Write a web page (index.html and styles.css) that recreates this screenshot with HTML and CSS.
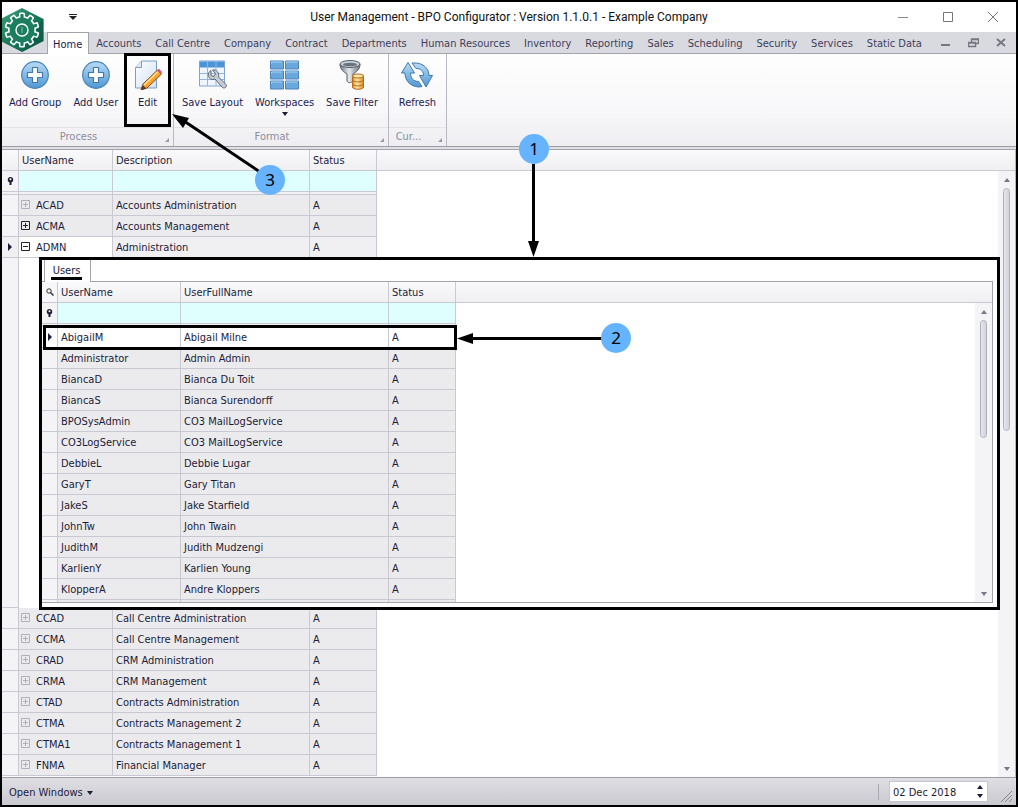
FILE: index.html
```html
<!DOCTYPE html>
<html lang="en">
<head>
<meta charset="utf-8">
<title>User Management - BPO Configurator</title>
<link rel="stylesheet" href="styles.css">
</head>
<body>
<svg width="0" height="0" class="defs" aria-hidden="true">
  <defs>
    <linearGradient id="blue" x1="0" y1="0" x2="0" y2="1"><stop offset="0" stop-color="#b9dcf5"/><stop offset="1" stop-color="#4f97d2"/></linearGradient>
    <linearGradient id="steel" x1="0" y1="0" x2="1" y2="0"><stop offset="0" stop-color="#6d7580"/><stop offset=".45" stop-color="#e6eaee"/><stop offset="1" stop-color="#6d7580"/></linearGradient>
    <linearGradient id="gold" x1="0" y1="0" x2="1" y2="0"><stop offset="0" stop-color="#e08a1c"/><stop offset=".4" stop-color="#ffe9a8"/><stop offset="1" stop-color="#e08a1c"/></linearGradient>
    <linearGradient id="paper" x1="0" y1="0" x2="1" y2="1"><stop offset="0" stop-color="#ffffff"/><stop offset="1" stop-color="#cfe0f6"/></linearGradient>
    <linearGradient id="hex" x1="0" y1="0" x2="1" y2="1"><stop offset="0" stop-color="#45a07c"/><stop offset=".5" stop-color="#17795a"/><stop offset="1" stop-color="#0d5a48"/></linearGradient>
    <symbol id="i-add" viewBox="0 0 28 28"><circle cx="14" cy="14" r="13.3" fill="url(#blue)" stroke="#4a83b8" stroke-width="1.2"/><path d="M11.5 6.500h5v5h5v5h-5v5h-5v-5h-5v-5h5z" fill="#fff" stroke="#4378ae" stroke-width="1.2" stroke-linejoin="round"/></symbol>
    <symbol id="i-filter" viewBox="0 0 7 8"><circle cx="3.500" cy="2.700" r="2.700" fill="#1e1e32"/><circle cx="3.500" cy="2.200" r="1" fill="#fff"/><path d="M2.500 5h2v3h-2z" fill="#1e1e32"/></symbol>
    <symbol id="i-plus" viewBox="0 0 9 9"><path d="M.5.500h8v8h-8zM2 4.500h5M4.500 2v5" fill="none" stroke="currentColor"/></symbol>
    <symbol id="i-minus" viewBox="0 0 9 9"><path d="M.5.500h8v8h-8zM2 4.500h5" fill="none" stroke="currentColor"/></symbol>
    <g id="teeth"><rect x="-3" y="-17.500" width="6" height="8" rx="1.500"/></g>
    <g id="teeth-in"><rect x="-1.600" y="-15.900" width="3.200" height="8" rx=".8"/></g>
  </defs>
</svg>
<div class="window">
  <header class="titlebar">
    <button class="quick" aria-label="Customize toolbar"><svg width="8" height="6" viewBox="0 0 8 6"><path d="M0 .5h8" stroke="#222"/><path d="M0 2h8L4 6z" fill="#222"/></svg></button>
    <h1 class="title">User Management - BPO Configurator : Version 1.1.0.1 - Example Company</h1>
    <div class="sysbuttons">
      <button aria-label="Minimize"><svg width="10" height="10"><path d="M0 5.500h10" stroke="#888"/></svg></button>
      <button aria-label="Maximize"><svg width="10" height="10"><path d="M.5.500h9v9h-9z" fill="none" stroke="#777"/></svg></button>
      <button aria-label="Close"><svg width="10" height="10"><path d="M0 0l10 10M10 0L0 10" stroke="#777"/></svg></button>
    </div>
  </header>
  <button class="logo" aria-label="Application menu">
    <svg width="42" height="44" viewBox="2 8 42 44">
      <path d="M22 8l21.500 11v22L22 52 .5 41V19z" fill="url(#hex)"/>
      <path d="M43.500 19v22L22 52 34 30z" fill="#0b5745" opacity=".5"/>
      <g transform="translate(22 30)" fill="#fff"><circle r="14"/>
        <use href="#teeth"/><use href="#teeth" transform="rotate(36)"/><use href="#teeth" transform="rotate(72)"/><use href="#teeth" transform="rotate(108)"/><use href="#teeth" transform="rotate(144)"/><use href="#teeth" transform="rotate(180)"/><use href="#teeth" transform="rotate(216)"/><use href="#teeth" transform="rotate(252)"/><use href="#teeth" transform="rotate(288)"/><use href="#teeth" transform="rotate(324)"/></g>
      <g transform="translate(22 30)" fill="#1c7d5f"><circle r="12.400"/>
        <use href="#teeth-in"/><use href="#teeth-in" transform="rotate(36)"/><use href="#teeth-in" transform="rotate(72)"/><use href="#teeth-in" transform="rotate(108)"/><use href="#teeth-in" transform="rotate(144)"/><use href="#teeth-in" transform="rotate(180)"/><use href="#teeth-in" transform="rotate(216)"/><use href="#teeth-in" transform="rotate(252)"/><use href="#teeth-in" transform="rotate(288)"/><use href="#teeth-in" transform="rotate(324)"/></g>
      <circle cx="22" cy="30" r="6" fill="none" stroke="#fff" stroke-width="1.400"/>
      <path d="M22 27v6" stroke="#7fc0a6"/>
    </svg>
  </button>
  <nav class="tabs">
    <button class="tab active">Home</button><button class="tab">Accounts</button><button class="tab">Call Centre</button><button class="tab">Company</button><button class="tab">Contract</button><button class="tab">Departments</button><button class="tab">Human Resources</button><button class="tab">Inventory</button><button class="tab">Reporting</button><button class="tab">Sales</button><button class="tab">Scheduling</button><button class="tab">Security</button><button class="tab">Services</button><button class="tab">Static Data</button>
    <div class="mdi">
      <button aria-label="Minimize child"><svg width="11" height="10"><path d="M1 7h9" stroke="#777784" stroke-width="2"/></svg></button>
      <button aria-label="Restore child"><svg width="11" height="10"><path d="M3.500 4V1h7v4.500H8M3 1.500h8M.5 4.500h7v4h-7zM0 5h8" fill="none" stroke="#777784" stroke-width="1.400"/></svg></button>
      <button aria-label="Close child"><svg width="10" height="10"><path d="M1 1l8 7M9 1L1 8" stroke="#777784" stroke-width="2"/></svg></button>
    </div>
  </nav>
  <section class="ribbon">
    <div class="group g-process">
      <div class="tools">
        <button class="tool"><svg width="28" height="28"><use href="#i-add"/></svg>Add Group</button>
        <button class="tool spaced"><svg width="28" height="28"><use href="#i-add"/></svg>Add User</button>
        <button class="tool marked"><svg width="28" height="30" viewBox="0 0 28 30"><path d="M1.500 7.500l6-6.500h15v27h-21z" fill="url(#paper)" stroke="#7c9cc8"/><path d="M1.500 7.500h6V1" fill="#dce9f9" stroke="#7c9cc8"/><path d="M7 30l2-6L23.500 10l4 4L13 28z" fill="#f6a42c" stroke="#8a4a1c"/><path d="M10 25L24 11.500" stroke="#ffe39a" stroke-width="1.600"/><path d="M7 30l1.700-5 3.700 3.500z" fill="#5b3a22"/><path d="M23 10.500l2-1.800 3 3.200-1.500 2z" fill="#d5586a"/></svg>Edit</button>
      </div>
      <div class="caption">Process<i class="launcher"></i></div>
    </div>
    <div class="group g-format">
      <div class="tools">
        <button class="tool"><svg width="30" height="29" viewBox="0 0 30 29"><path d="M1.500.5h25v25h-25z" fill="#eef5fd" stroke="#7fa2d0"/><path d="M2 1h24v6H2z" fill="#4c94d8"/><path d="M1.500 13h25M1.500 19h25M9.500 1v24M18 1v24" stroke="#93b4dc"/><path d="M13 10c-4 2-3.500 8 1 9l3-.5 7 8c2 2.500 5.500 0 4-2.500l-7.500-7.500c1-4-2-8-6-7l3 3.500-1.500 3-3-1z" fill="#c5ccd5" stroke="#616b78"/></svg>Save Layout</button>
        <button class="tool"><svg width="30" height="29" viewBox="0 0 30 29"><g fill="#69a8dc" stroke="#4b83bd"><path d="M.5.500h13v8H.500zM15.500.500h13v8h-13zM.5 10.500h13v8H.500zM15.500 10.500h13v8h-13zM.5 20.500h13v8H.500zM15.500 20.500h13v8h-13z"/></g><path d="M1.500 3V1.500H12M16.500 3V1.500H28M1.500 13v-1.500H12M16.500 13v-1.500H28M1.500 23v-1.500H12M16.500 23v-1.500H28" fill="none" stroke="#add4f2"/></svg>Workspaces<i class="drop"></i></button>
        <button class="tool"><svg width="26" height="30" viewBox="0 0 26 30"><path d="M1 4c0 6 4 8 7 10v7c1.500 2.500 4 2 6 0v-7c3-2 7-4 7-10z" fill="url(#steel)" stroke="#59616c"/><ellipse cx="11" cy="4" rx="10" ry="3.500" fill="#c9d0d8" stroke="#59616c"/><ellipse cx="11" cy="4.500" rx="7" ry="1.800" fill="#69727f"/><path d="M13.500 16v11c0 3 11 3 11 0V16z" fill="url(#gold)" stroke="#b36a1a"/><ellipse cx="19" cy="16" rx="5.500" ry="2" fill="#ffe7a6" stroke="#b36a1a"/><path d="M13.500 20c1 2.500 10 2.500 11 0M13.500 24c1 2.500 10 2.500 11 0" fill="none" stroke="#b36a1a"/></svg>Save Filter</button>
      </div>
      <div class="caption">Format<i class="launcher"></i></div>
    </div>
    <div class="group g-current">
      <div class="tools">
        <button class="tool"><svg width="32" height="27" viewBox="0 0 32 27"><g fill="url(#blue)" stroke="#3f78ad" stroke-linejoin="round"><path d="M7 1L.500 11.500H4C4 19 9 25 18 25.500l3-.5-3.500-5C12 20 9.500 16 9.500 11.500h4z"/><path d="M25 25.500L31.500 14H28C28 7 22 1.500 14 1.500h-3l4 5.500c5 0 7.500 3 7.500 7h-4z"/></g></svg>Refresh</button>
      </div>
      <div class="caption">Cur...<i class="launcher"></i></div>
    </div>
  </section>
  <main class="content">
    <div class="outer">
      <table class="grid">
        <colgroup><col class="c-ind"><col class="c-code"><col class="c-desc"><col class="c-status"><col></colgroup>
        <thead>
          <tr><th></th><th>UserName</th><th>Description</th><th>Status</th><th class="rest"></th></tr>
          <tr class="filter"><td class="ind"><svg width="7" height="8"><use href="#i-filter"/></svg></td><td><input aria-label="Filter UserName"></td><td><input aria-label="Filter Description"></td><td><input aria-label="Filter Status"></td><td class="rest"></td></tr>
          <tr class="gap"><td></td><td></td><td></td><td></td><td class="rest"></td></tr>
        </thead>
        <tbody>
          <tr><td class="ind"></td><td class="node"><svg width="9" height="9"><use href="#i-plus"/></svg>ACAD</td><td>Accounts Administration</td><td>A</td><td class="rest"></td></tr>
          <tr><td class="ind"></td><td class="node dark"><svg width="9" height="9"><use href="#i-plus"/></svg>ACMA</td><td>Accounts Management</td><td>A</td><td class="rest"></td></tr>
          <tr class="focused"><td class="ind"><i class="pointer"></i></td><td class="node dark"><svg width="9" height="9"><use href="#i-minus"/></svg>ADMN</td><td>Administration</td><td>A</td><td class="rest"></td></tr>
          <tr class="detail-row"><td class="ind"></td><td colspan="4" class="detail">
            <div class="subtabs"><button class="subtab"><span>Users</span></button></div>
            <div class="inner">
              <table class="grid">
                <colgroup><col class="d-ind"><col class="d-user"><col class="d-full"><col class="c-status"><col></colgroup>
                <thead>
                  <tr><th class="ind"><svg width="8" height="8"><circle cx="3" cy="3" r="2.200" fill="none" stroke="#333"/><path d="M4.500 4.500l3 3" stroke="#333" stroke-width="1.500"/></svg></th><th>UserName</th><th>UserFullName</th><th>Status</th><th class="rest"></th></tr>
                  <tr class="filter"><td class="ind"><svg width="7" height="8"><use href="#i-filter"/></svg></td><td><input aria-label="Filter user"></td><td><input aria-label="Filter full name"></td><td><input aria-label="Filter user status"></td><td class="rest"></td></tr>
                  <tr class="gap"><td></td><td></td><td></td><td></td><td class="rest"></td></tr>
                </thead>
                <tbody>
                  <tr class="selected"><td class="ind"><i class="pointer"></i></td><td>AbigailM</td><td>Abigail Milne</td><td>A</td><td class="rest"></td></tr>
                  <tr><td class="ind"></td><td>Administrator</td><td>Admin Admin</td><td>A</td><td class="rest"></td></tr>
                  <tr><td class="ind"></td><td>BiancaD</td><td>Bianca Du Toit</td><td>A</td><td class="rest"></td></tr>
                  <tr><td class="ind"></td><td>BiancaS</td><td>Bianca Surendorff</td><td>A</td><td class="rest"></td></tr>
                  <tr><td class="ind"></td><td>BPOSysAdmin</td><td>CO3 MailLogService</td><td>A</td><td class="rest"></td></tr>
                  <tr><td class="ind"></td><td>CO3LogService</td><td>CO3 MailLogService</td><td>A</td><td class="rest"></td></tr>
                  <tr><td class="ind"></td><td>DebbieL</td><td>Debbie Lugar</td><td>A</td><td class="rest"></td></tr>
                  <tr><td class="ind"></td><td>GaryT</td><td>Gary Titan</td><td>A</td><td class="rest"></td></tr>
                  <tr><td class="ind"></td><td>JakeS</td><td>Jake Starfield</td><td>A</td><td class="rest"></td></tr>
                  <tr><td class="ind"></td><td>JohnTw</td><td>John Twain</td><td>A</td><td class="rest"></td></tr>
                  <tr><td class="ind"></td><td>JudithM</td><td>Judith Mudzengi</td><td>A</td><td class="rest"></td></tr>
                  <tr><td class="ind"></td><td>KarlienY</td><td>Karlien Young</td><td>A</td><td class="rest"></td></tr>
                  <tr><td class="ind"></td><td>KlopperA</td><td>Andre Kloppers</td><td>A</td><td class="rest"></td></tr>
                  <tr class="cut"><td class="ind"></td><td></td><td></td><td></td><td class="rest"></td></tr>
                </tbody>
              </table>
              <div class="scroll"><div class="cap"></div><div class="track"><i class="up"></i><div class="thumb inner-thumb"></div><i class="down"></i></div></div>
            </div>
          </td></tr>
          <tr><td class="ind"></td><td class="node"><svg width="9" height="9"><use href="#i-plus"/></svg>CCAD</td><td>Call Centre Administration</td><td>A</td><td class="rest"></td></tr>
          <tr><td class="ind"></td><td class="node"><svg width="9" height="9"><use href="#i-plus"/></svg>CCMA</td><td>Call Centre Management</td><td>A</td><td class="rest"></td></tr>
          <tr><td class="ind"></td><td class="node"><svg width="9" height="9"><use href="#i-plus"/></svg>CRAD</td><td>CRM Administration</td><td>A</td><td class="rest"></td></tr>
          <tr><td class="ind"></td><td class="node"><svg width="9" height="9"><use href="#i-plus"/></svg>CRMA</td><td>CRM Management</td><td>A</td><td class="rest"></td></tr>
          <tr><td class="ind"></td><td class="node"><svg width="9" height="9"><use href="#i-plus"/></svg>CTAD</td><td>Contracts Administration</td><td>A</td><td class="rest"></td></tr>
          <tr><td class="ind"></td><td class="node"><svg width="9" height="9"><use href="#i-plus"/></svg>CTMA</td><td>Contracts Management 2</td><td>A</td><td class="rest"></td></tr>
          <tr><td class="ind"></td><td class="node"><svg width="9" height="9"><use href="#i-plus"/></svg>CTMA1</td><td>Contracts Management 1</td><td>A</td><td class="rest"></td></tr>
          <tr><td class="ind"></td><td class="node"><svg width="9" height="9"><use href="#i-plus"/></svg>FNMA</td><td>Financial Manager</td><td>A</td><td class="rest"></td></tr>
        </tbody>
      </table>
      <div class="scroll"><div class="cap"></div><div class="track"><i class="up"></i><div class="thumb outer-thumb"></div><i class="down"></i></div></div>
    </div>
  </main>
  <footer class="status">
    <button class="open">Open Windows<i class="drop"></i></button>
    <i class="divider"></i>
    <div class="date"><input value="02 Dec 2018" aria-label="Date"><div class="spin"><button aria-label="Next day"><i class="spin-up"></i></button><button aria-label="Previous day"><i class="spin-down"></i></button></div></div>
    <svg class="grip" width="12" height="12"><path d="M1 12L12 1M5 12l7-7M9 12l3-3" stroke="#85858f"/></svg>
  </footer>
  <svg class="arrows" width="640" height="360" aria-hidden="true">
    <path d="M533.500 164v80M470 338.500h134M184 121l76 51" stroke="#000" stroke-width="3"/>
    <path d="M528 241h11l-5.500 16zM473 333v11l-16-5.500zM172 114l17 4-6 10z"/>
  </svg>
  <span class="mark m1">1</span><span class="mark m2">2</span><span class="mark m3">3</span>
</div>
</body>
</html>
```
FILE: styles.css
```css
*,*::after{box-sizing:border-box}
body{margin:0;font:11px/14px "DejaVu Sans Condensed","DejaVu Sans",sans-serif;color:#1c1c38}
button,input{font:inherit;color:inherit;background:none;border:0;padding:0;margin:0}
i{display:block}
.defs{position:absolute}
.window{position:relative;min-height:100vh;border:2px solid #000;display:flex;flex-direction:column;background:#fff}
.titlebar{display:flex;align-items:center;height:30px;padding:0 18px 0 67px}
.quick{display:flex;width:8px}
.title{flex:1;margin:0;padding-left:43px;text-align:center;font:12px/16px Roboto,"Liberation Sans",sans-serif;color:#111}
.sysbuttons{display:flex;gap:35px}
.sysbuttons button{display:flex}
.logo{position:absolute;left:0;top:6px;z-index:3;display:flex}
.tabs{display:flex;height:22px;padding:0 10px 0 45px;background:#d9d9e0;border-bottom:1px solid #a3a3ae;color:#3e3e5c}
.tab{padding:3px 7px 0;white-space:nowrap}
.tab.active{background:#fff;height:22px;padding:2px 6px 0 5px;border:1px solid #a3a3ae;border-bottom:0;color:#1c1c50}
.mdi{display:flex;align-items:center;gap:17px;margin-left:auto}
.mdi button{display:flex}
.ribbon{display:flex;height:93px;background:linear-gradient(#fefefe,#f8f8fa 60%,#eeeef2);border-bottom:1px solid #9c9ca6}
.group{display:flex;flex-direction:column;border-right:1px solid #b9b9c3}
.g-process{width:172px}
.g-format{width:215px}
.g-current{width:58px}
.tools{flex:1;display:flex;justify-content:space-between}
.g-process .tools{padding:0 2px 0 7px;justify-content:flex-start}
.g-format .tools{padding:0 10px 0 8px}
.g-current .tools{justify-content:center}
.tool{display:flex;flex:none;flex-direction:column;align-items:center;padding-top:6px;white-space:nowrap;color:#1c1c50}
.tool svg{height:30px;margin-bottom:6px}
.tool .drop{margin-top:2px}
.tool.spaced{margin-left:12px}
.tool.marked{width:47px;border:3px solid #000;margin:-1px 0 0 auto;padding-top:4px;z-index:1}
.caption{display:flex;justify-content:center;position:relative;height:19px;padding:2px 18px 0 0;border-top:1px solid #e2e2e8;color:#8d8d9c}
.launcher{position:absolute;right:4px;bottom:4px;border:2px solid #9a9aa4;border-top-color:transparent;border-left-color:transparent}
.drop{border:3px solid transparent;border-top:4px solid #1c1c38;border-bottom:0}
.content{flex:1;border-top:2px solid #dedee3;background:#fff;display:flex}
.outer{flex:1;display:flex;border-top:1px solid #a3a3ae;border-right:1px solid #b5b5bf}
.grid{flex:1;width:100%;table-layout:fixed;border-collapse:separate;border-spacing:0;align-self:flex-start}
.c-ind{width:17px}.c-code{width:94px}.c-desc{width:197px}.c-status{width:67px}
.d-ind{width:16px}.d-user{width:123px}.d-full{width:208px}
.grid th,.grid td{height:21px;padding:2px 3px 0;border-right:1px solid #c9c9d3;border-bottom:1px solid #c9c9d3;text-align:left;font-weight:400;white-space:nowrap;background:#ebebed}
.grid th,.cap{background:linear-gradient(#fafafb,#f0f0f3)}
.grid .ind{padding:0;background:#f4f4f7}
.grid th.ind{background:#f7f7f9}
.grid .ind svg{display:block;margin:0 auto}
.grid .rest{border-right:0}
.grid td.rest{background:#fff;border:0}
.grid .filter td{background:#dfffff;padding:0}
.grid .filter td.ind{background:#f4f4f7}
.grid .filter td.rest{background:#fff}
.filter input{display:block;width:100%;height:19px;padding:0 4px}
.grid .gap td{height:3px;padding:0;background:#f2f2f5}
.grid .gap td.rest{background:#fff}
.grid .cut td{height:2px;padding:0;border-bottom:0}
.node svg{vertical-align:middle;margin:-3px 6px 0 -1px;color:#b0b0ba}
.node.dark svg{color:#222}
.grid .focused td{background:#f0f0f3}
.grid .focused .node,.grid .focused .rest,.grid .selected td{background:#fff}
.pointer{width:4px;height:8px;margin:0 auto;border:4px solid transparent;border-left-color:#1c1c38;border-right:0}
.detail-row{height:350px}
.grid .detail{position:relative;padding:2px 5px 4px 23px;background:#fff;border-right:0;border-bottom:0;vertical-align:top}
.detail::after{content:"";position:absolute;z-index:2;top:-1px;right:-2px;bottom:-2px;left:20px;border:3px solid #000;pointer-events:none}
.subtabs{display:flex;height:22px;padding-left:2px;border-bottom:1px solid #a3a3ae}
.subtab{height:22px;width:47px;padding:2px 2px 0 0;border:1px solid #a3a3ae;border-top:0;border-bottom:0;background:#fff}
.subtab span{display:inline-block;padding:0 2px;border-bottom:3px solid #000;line-height:13px}
.inner{display:flex;border-right:1px solid #a3a3ae;border-bottom:1px solid #a3a3ae}
.selected .ind{position:relative}
.selected .ind::after{content:"";position:absolute;z-index:1;left:1px;top:-2px;width:414px;height:25px;border:3px solid #000;pointer-events:none}
.scroll{display:flex;flex-direction:column;width:17px}
.cap{height:21px;border-bottom:1px solid #c9c9d3}
.track{flex:1;display:flex;flex-direction:column;align-items:center;padding:7px 0 6px;background:#f4f4f7}
.up{border:3px solid transparent;border-bottom:4px solid #77778a;border-top:0}
.down{border:3px solid transparent;border-top:4px solid #77778a;border-bottom:0;margin-top:auto}
.thumb{width:7px;margin-top:6px;border:1px solid #b0b0bb;border-radius:4px;background:linear-gradient(90deg,#e6e6ec,#d2d2da)}
.inner-thumb{height:118px}
.outer-thumb{height:243px}
.status{display:flex;align-items:center;height:28px;padding:0 4px 0 7px;border-top:1px solid #9c9ca6;background:linear-gradient(#dedee3,#c9c9d0)}
.open{display:flex;align-items:center;gap:4px;padding-top:2px}
.divider{width:1px;height:16px;margin:0 10px 0 auto;background:#a9a9b3}
.date{display:flex;width:99px;height:21px;background:#fff;border:1px solid #c5c5cf}
.date input{flex:1;min-width:0;padding:2px 0 0 3px}
.spin{display:flex;flex-direction:column;justify-content:space-around;align-items:center;width:14px}
.spin button{display:flex}
.spin-up{border:3px solid transparent;border-bottom:4px solid #1c1c38;border-top:0}
.spin-down{border:3px solid transparent;border-top:4px solid #1c1c38;border-bottom:0}
.grip{margin-left:12px;align-self:flex-end;margin-bottom:3px}
.arrows{position:absolute;left:-2px;top:-2px;z-index:4;pointer-events:none}
.mark{position:absolute;z-index:5;width:30px;height:30px;border-radius:50%;background:#66b3ff;color:#000;text-align:center;font:17px/30px "Noto Sans",sans-serif}
.m1{left:517px;top:132px}.m2{left:599px;top:321px}.m3{left:253px;top:163px}
```
